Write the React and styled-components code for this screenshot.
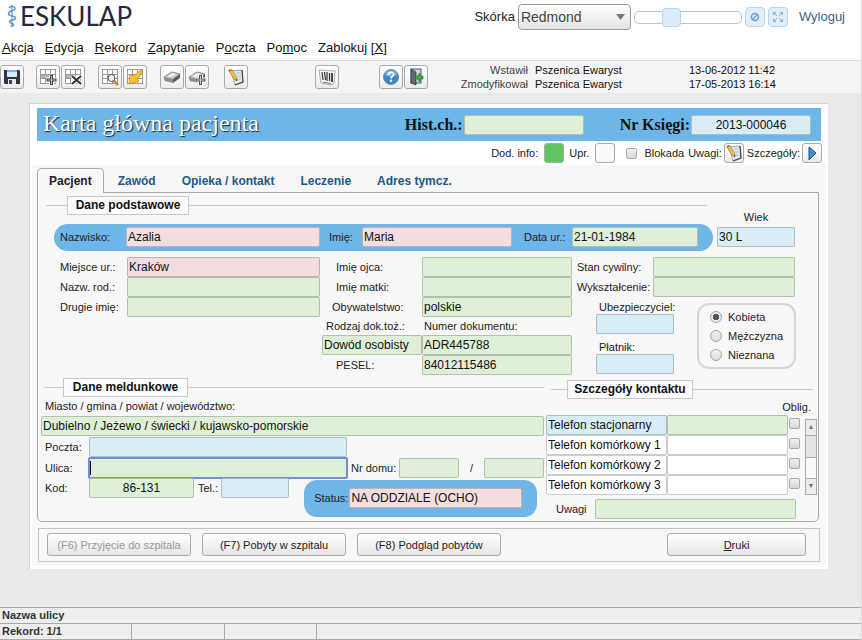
import { useState } from 'react';
import styled, { createGlobalStyle, css } from 'styled-components';

const colors = {
    blue: '#6eb5e8',
    green: '#dff0d8',
    pink: '#f2dede',
    sky: '#d9edf7',
    white: '#ffffff',
    page: '#eaeaea',
    panel: '#f7f7f7',
    line: '#c8c8c8',
    border: '#a8a8a8',
    link: '#1d5987',
};

const GlobalStyle = createGlobalStyle`
    * {
        box-sizing: border-box;
    }
    body {
        margin: 0;
        background: ${colors.page};
        color: #222;
        font: 11px/14px "Liberation Sans", Arial, sans-serif;
    }
    input, button, select {
        font-family: inherit;
    }
`;

/* ---------- icons ---------- */

const Svg = ({ size = 18, children }) => (
    <svg width={size} height={size} viewBox="0 0 18 18" aria-hidden="true">
        {children}
    </svg>
);

const Grid = () => (
    <>
        <rect x="1" y="1" width="15" height="14" fill="#fff" />
        <path
            d="M1.500 1v14M6.500 1v14M11.500 1v14M16.500 1v14M1 1.500h16M1 6.500h16M1 10.500h16M1 15.500h16"
            stroke="#9a9a9a"
            fill="none"
        />
    </>
);

const SaveIcon = () => (
    <Svg>
        <path d="M1 2h15l1 1v13H2l-1-1z" fill="#2b3440" />
        <rect x="4" y="2" width="10" height="7" fill="#d6ebf8" />
        <rect x="4" y="2" width="10" height="2" fill="#7cb5dd" />
        <rect x="5" y="11" width="8" height="5" fill="#e9e9e9" />
        <rect x="6" y="12" width="3" height="4" fill="#3c4650" />
    </Svg>
);

const AddRowIcon = () => (
    <Svg>
        <Grid />
        <rect x="2" y="7" width="9" height="3" fill="#b5b5b5" />
        <path d="M12.500 7v10M7.500 12h10" stroke="#fff" strokeWidth="5" />
        <path d="M12.500 7v10M7.500 12h10" stroke="#444" strokeWidth="3" />
        <path d="M12.500 8v8M8.500 12h8" stroke="#bbb" strokeWidth="1" />
    </Svg>
);

const DeleteRowIcon = () => (
    <Svg>
        <Grid />
        <rect x="2" y="7" width="9" height="3" fill="#b5b5b5" />
        <path d="M8 8l9 8M17 8l-9 8" stroke="#fff" strokeWidth="4" />
        <path d="M8 8l9 8M17 8l-9 8" stroke="#333" strokeWidth="2" />
    </Svg>
);

const SearchIcon = () => (
    <Svg>
        <Grid />
        <path d="M12 12l5 5" stroke="#c78a2c" strokeWidth="2.500" />
        <circle cx="10.500" cy="10" r="3.500" fill="#e8f3fb" stroke="#555" />
    </Svg>
);

const RunQueryIcon = () => (
    <Svg>
        <Grid />
        <path
            d="M16 1c0 4-2 8-5 10l2 2-10 3 1-10 2 2c4-1 6-4 10-7z"
            fill="#fbc02d"
            stroke="#c98a1b"
            strokeWidth="0.800"
        />
    </Svg>
);

const Eraser = () => (
    <>
        <path d="M1 9l8-5 8 2-7 6-8-1z" fill="#c9c9c9" stroke="#666" strokeWidth="0.700" />
        <path d="M1 9l9 2v4l-8-2c-1-1-1-3-1-4z" fill="#8d8d8d" />
        <path d="M10 11l7-5v4l-7 5z" fill="#5c5c5c" />
        <path d="M4 8l6-3 3 1-5 3z" fill="#f3f3f3" />
    </>
);

const EraserIcon = () => (
    <Svg>
        <Eraser />
    </Svg>
);

const EraserAddIcon = () => (
    <Svg>
        <Eraser />
        <path d="M12.500 7v10M7.500 12h10" stroke="#fff" strokeWidth="5" />
        <path d="M12.500 7v10M7.500 12h10" stroke="#555" strokeWidth="3" />
        <path d="M12.500 8v8M8.500 12h8" stroke="#ccc" strokeWidth="1" />
    </Svg>
);

const NoteIcon = () => (
    <Svg>
        <path d="M4 3l11-1 1 12-8 3z" fill="#dde8f1" stroke="#888" strokeWidth="0.700" />
        <path d="M15 2l1 12-8 3" stroke="#444" strokeWidth="1.200" fill="none" />
        <path d="M9 5l4 0M10 8h4M11 11h3" stroke="#a9bac8" strokeWidth="0.800" />
        <path d="M2 3l3-1 5 8v3l-3-2z" fill="#f6c23e" stroke="#8a6a1f" strokeWidth="0.600" />
        <path d="M1 2l3-1 1 1-3 1.500z" fill="#d0604f" />
        <path d="M8.500 12l1.500-1v2z" fill="#333" />
    </Svg>
);

const BarcodeIcon = () => (
    <Svg>
        <path d="M1 2l16 1-1 12-3 2-10-2z" fill="#f6f6f6" stroke="#999" strokeWidth="0.800" />
        <path d="M4 4l1 8M6.500 4l1 8M9 4v9M11.500 5v8" stroke="#333" strokeWidth="1.200" />
        <path d="M14 5v9" stroke="#333" strokeWidth="1.800" />
        <path d="M5 14l8 1.500" stroke="#777" strokeWidth="1" />
    </Svg>
);

const HelpIcon = () => (
    <Svg>
        <circle cx="9" cy="9" r="7.500" fill="#3b86c6" stroke="#7c8b99" />
        <path d="M3 7a6.200 6.200 0 0 1 12 0c-3 2-9 2-12 0z" fill="#77b3e0" />
        <path
            d="M6.500 7c0-3.300 5-3.300 5-.4 0 1.700-2.400 1.700-2.400 3.600"
            stroke="#fff"
            strokeWidth="1.800"
            fill="none"
        />
        <circle cx="9" cy="12.800" r="1.200" fill="#fff" />
    </Svg>
);

const ExitIcon = () => (
    <Svg>
        <rect x="4" y="1" width="10" height="14" fill="#ccd6df" stroke="#4d5660" />
        <path d="M4 1l5 3v13l-5-2z" fill="#5c6b78" stroke="#333" strokeWidth="0.700" />
        <path d="M16 8h-3V5L9 9.500l4 4.500v-3h3z" fill="#3fae3c" stroke="#1d7a1f" strokeWidth="0.700" />
    </Svg>
);

const PlayIcon = () => (
    <Svg>
        <path d="M6 3l7 6-7 7z" fill="#3d94d1" stroke="#1b4f7c" />
    </Svg>
);

const BanIcon = () => (
    <svg width="10" height="10" viewBox="0 0 10 10" aria-hidden="true">
        <circle cx="5" cy="5" r="3.500" fill="none" stroke="#6ba3cc" strokeWidth="1.500" />
        <path d="M7.500 2.500l-5 5" stroke="#6ba3cc" strokeWidth="1.500" />
    </svg>
);

const ExpandIcon = () => (
    <svg width="12" height="12" viewBox="0 0 12 12" aria-hidden="true">
        <path
            d="M1.500 4v-2.500h2.500M8 1.500h2.500v2.500M10.500 8v2.500h-2.500M4 10.500h-2.500v-2.500M2 2l3 3M10 2l-3 3M10 10l-3-3M2 10l3-3"
            fill="none"
            stroke="#7fb0d6"
        />
    </svg>
);

const StaffIcon = () => (
    <svg width="10" height="24" viewBox="0 0 10 24" aria-hidden="true">
        <path d="M5 1v22" stroke="#4f8ccb" strokeWidth="1" />
        <path
            d="M2 4c2-3 7-1 6 1S1 7 1.500 10s7 1 7 4-6 1-6 3.500 4 1 4 3-2 1.500-3 1.500"
            fill="none"
            stroke="#5b97d3"
            strokeWidth="1.500"
        />
    </svg>
);

/* ---------- header ---------- */

const Page = styled.div`
    display: flex;
    flex-direction: column;
    min-height: 100vh;
    border-right: 1px solid #dcdcdc;
`;

const Header = styled.header`
    background: #fff;
    height: 60px;
    display: flex;
    flex-direction: column;
    justify-content: space-between;
`;

const HeaderTop = styled.div`
    display: flex;
    justify-content: space-between;
    align-items: flex-start;
    padding: 0 16px 0 7px;
`;

const Logo = styled.div`
    display: flex;
    align-items: center;
    gap: 3px;
    color: #25283c;
    font: 26px/32px Lato, sans-serif;
`;

const SkinBar = styled.div`
    display: flex;
    align-items: center;
    gap: 3px;
    padding-top: 4px;
    font-size: 13px;
`;

const SelectBox = styled.div`
    position: relative;
    svg {
        position: absolute;
        right: 6px;
        top: 10px;
        pointer-events: none;
    }
`;

const Select = styled.select`
    appearance: none;
    width: 113px;
    height: 26px;
    padding: 0 2px;
    border: 1px solid #999;
    border-radius: 4px;
    background: linear-gradient(#fff, #e4e4e4);
    color: #444;
    font-size: 14px;
`;

const Slider = styled.input`
    appearance: none;
    width: 108px;
    height: 13px;
    margin: 0;
    border: 1px solid #a9cbe6;
    border-radius: 5px;
    background: #fff;
    &::-webkit-slider-thumb {
        appearance: none;
        width: 19px;
        height: 19px;
        border: 1px solid #b9d7ec;
        border-radius: 4px;
        background: #dcebf8;
    }
`;

const SkinButton = styled.button`
    display: flex;
    align-items: center;
    justify-content: center;
    width: 20px;
    height: 20px;
    padding: 0;
    border: 1px solid #b9d7ec;
    border-radius: 4px;
    background: #e0eef9;
`;

const Logout = styled.a`
    margin-left: 8px;
    color: #3d6283;
    text-decoration: none;
`;

const Menu = styled.nav`
    display: flex;
    gap: 11px;
    padding: 0 2px 4px;
    a {
        color: #111;
        font-size: 13px;
        line-height: 16px;
        text-decoration: none;
    }
`;

const Toolbar = styled.div`
    display: flex;
    align-items: center;
    height: 33px;
    border-top: 1px solid #dcdcdc;
    background: #f4f4f4;
`;

const ToolGroup = styled.div`
    display: flex;
    gap: 1px;
    margin-left: ${(p) => p.$space || 0}px;
`;

const IconButton = styled.button`
    display: flex;
    align-items: center;
    justify-content: center;
    flex: none;
    width: ${(p) => p.$size || 24}px;
    height: ${(p) => p.$size || 24}px;
    padding: 0;
    border: 1px solid #aaa;
    border-radius: 3px;
    background: ${(p) => p.$color || 'linear-gradient(#fff, #ececec)'};
    svg {
        flex: none;
    }
`;

const Audit = styled.dl`
    display: grid;
    grid-template-columns: 72px 147px auto;
    column-gap: 7px;
    margin: 0 0 0 28px;
    color: #111;
    white-space: nowrap;
    dt {
        text-align: right;
        color: #444;
    }
    dd {
        margin: 0;
    }
`;

/* ---------- card ---------- */

const Card = styled.main`
    margin: 10px 33px 30px 29px;
    border: 1px solid #d4d4d4;
    border-width: 1px 0 0 1px;
    background: #fff;
    padding-bottom: 4px;
`;

const TitleBar = styled.div`
    display: flex;
    align-items: center;
    height: 33px;
    margin: 4px 7px 0;
    padding: 0 10px 0 6px;
    background: ${colors.blue};
    color: #111;
    h1 {
        flex: 1;
        margin: 0;
        padding-bottom: 4px;
        color: #fff;
        font: 24px/28px "Liberation Serif", serif;
        text-shadow: 1px 1px 1px #123;
    }
    label {
        margin: 0 1px 0 36px;
        font: bold 16px/20px "Liberation Serif", serif;
    }
`;

const InfoRow = styled.div`
    display: flex;
    align-items: center;
    justify-content: flex-end;
    height: 24px;
    padding: 0 6px;
    gap: 3px;
`;

const InfoItem = styled.label`
    display: flex;
    align-items: center;
    gap: ${(p) => p.$gap || 6}px;
    margin-left: ${(p) => p.$space || 0}px;
`;

const Body = styled.div`
    margin: 0 2px;
    padding: 3px 6px 3px 5px;
    background: ${colors.panel};
`;

const Tabs = styled.div`
    display: flex;
    gap: 2px;
`;

const Tab = styled.button`
    height: 25px;
    margin-bottom: -1px;
    padding: 0 11px;
    border: 1px solid transparent;
    border-bottom: 0;
    border-radius: 5px 5px 0 0;
    background: none;
    color: ${colors.link};
    font-size: 12px;
    font-weight: bold;
    ${(p) =>
        p.$active &&
        css`
            border-color: ${colors.border};
            background: ${colors.panel};
            color: #222;
            position: relative;
        `}
`;

const Panel = styled.div`
    margin-right: 1px;
    border: 1px solid ${colors.border};
    border-radius: 0 0 5px 5px;
    padding: 3px 0 2px;
`;

const Field = styled.input`
    display: block;
    width: ${(p) => (p.$width ? `${p.$width}px` : '100%')};
    min-width: 0;
    height: 20px;
    padding: 0 1px;
    border: 1px solid rgba(0, 0, 0, 0.2);
    border-radius: 2px;
    background-color: ${(p) => colors[p.$tone || 'green']};
    color: #111;
    font-size: 12px;
    text-align: ${(p) => (p.$center ? 'center' : 'left')};
`;

const StreetField = styled(Field)`
    width: auto;
    flex: 1;
    height: 22px;
    margin: 0 -1px;
    border: 2px solid #6f8fd0;
    background-image: linear-gradient(#000, #000);
    background-repeat: no-repeat;
    background-size: 1px 14px;
    background-position: 0 center;
    outline: none;
`;

const CityField = styled(Field)`
    width: calc(100% - 3px);
    margin-left: 3px;
`;

const PhoneField = styled(Field)`
    margin-left: 3px;
`;

const Label = styled.label`
    padding-left: ${(p) => p.$indent || 0}px;
    white-space: nowrap;
`;

const LegendRow = styled.div`
    display: flex;
    align-items: center;
    padding: ${(p) => p.$pad || '0 6px'};
    &::before,
    &::after {
        content: '';
        height: 1px;
        background: ${colors.line};
    }
    &::before {
        width: ${(p) => p.$lead || 20}px;
    }
    &::after {
        flex: 1;
    }
    h2 {
        margin: 0;
        width: ${(p) => p.$width || 124}px;
        height: 19px;
        border: 1px solid ${colors.line};
        background: #fbfbfb;
        color: #111;
        font-size: 12px;
        line-height: 17px;
        text-align: center;
        white-space: nowrap;
    }
`;

const BasicTop = styled.div`
    display: grid;
    grid-template-columns: 1fr 105px;
`;

const Pill = styled.div`
    display: grid;
    grid-template-columns: 66px 194fr 42px 150fr 60px 126fr;
    align-items: center;
    margin: 9px 0 0 16px;
    padding: 3px 15px 4px 6px;
    border-radius: 14px;
    background: ${colors.blue};
`;

const Age = styled.div`
    display: flex;
    flex-direction: column;
    align-items: center;
    gap: 3px;
    width: 78px;
    margin: 14px 0 0 4px;
`;

const Details = styled.div`
    display: grid;
    grid-template-columns: 260fr 252fr 223fr;
    margin: 6px 23px 3px 22px;
`;

const FieldGrid = styled.div`
    display: grid;
    grid-template-columns: ${(p) => p.$label}px 1fr;
    grid-template-rows: 20px 20px 20px 18px;
    grid-auto-rows: 20px;
    align-items: center;
    align-content: start;
    margin-left: ${(p) => p.$space || 0}px;
`;

const PairGrid = styled(FieldGrid)`
    grid-template-rows: 20px 20px;
`;

const Insurance = styled.div`
    display: flex;
    justify-content: space-between;
    align-items: flex-start;
    margin: 3px 0 0 24px;
`;

const InsuranceFields = styled.div`
    display: flex;
    flex-direction: column;
    width: 78px;
    label {
        padding-left: 3px;
    }
    input + label {
        margin-top: 6px;
    }
`;

const SexBox = styled.div`
    display: flex;
    flex-direction: column;
    justify-content: center;
    gap: 5px;
    width: 99px;
    height: 66px;
    padding-left: 11px;
    margin: 3px -1px 0 0;
    border: 2px solid #d6d6d6;
    border-radius: 12px;
    label {
        display: flex;
        align-items: center;
        gap: 6px;
    }
`;

const Radio = styled.input`
    appearance: none;
    width: 12px;
    height: 12px;
    margin: 0;
    border: 1px solid #a5a5a5;
    border-radius: 50%;
    background: linear-gradient(#f2f2f2, #dcdcdc);
    &:checked {
        background: radial-gradient(#555 0 3px, #eaeaea 3px);
    }
`;

const Check = styled.input`
    appearance: none;
    width: 11px;
    height: 11px;
    margin: 0;
    border: 1px solid #aaa;
    border-radius: 2px;
    background: linear-gradient(#f0f0f0, #d8d8d8);
`;

const Lower = styled.div`
    display: grid;
    grid-template-columns: 508fr 272fr;
`;

const Address = styled.div`
    padding-right: 2px;
`;

const CityLabel = styled(Label)`
    display: block;
    padding: 2px 0 3px 7px;
`;

const AddressRow = styled.div`
    display: flex;
    align-items: center;
    height: 21px;
    margin-right: ${(p) => p.$end || 0}px;
    padding-left: 7px;
    > label:first-child {
        width: 44px;
        flex: none;
    }
`;

const HouseNumber = styled.div`
    display: flex;
    align-items: center;
    width: 197px;
    padding-left: 4px;
    span {
        flex: 1;
        text-align: center;
    }
    label {
        margin-right: 3px;
    }
`;

const CodeRow = styled(AddressRow)`
    height: 41px;
    align-items: flex-start;
    > label {
        line-height: 20px;
    }
`;

const Status = styled.div`
    display: flex;
    align-items: center;
    gap: 1px;
    flex: 1;
    height: 37px;
    margin: 2px 7px 0 15px;
    padding: 0 15px 2px 10px;
    border-radius: 13px;
    background: ${colors.blue};
`;

const Contact = styled.div`
    padding-top: 2px;
`;

const PhoneTable = styled.table`
    width: 100%;
    table-layout: fixed;
    border-spacing: 0;
    td,
    th {
        padding: 0;
    }
    th {
        height: 16px;
        padding-right: 7px;
        font-weight: normal;
        text-align: right;
    }
    td:nth-child(3) {
        padding-left: 1px;
    }
`;

const ScrollBar = styled.div`
    display: flex;
    flex-direction: column;
    height: 76px;
    width: 12px;
    margin: 3px 0 0 1px;
    border: 1px solid #aaa;
    background: #f9f9f9;
    button {
        height: 16px;
        padding: 0;
        border: 0;
        border-bottom: 1px solid #aaa;
        background: #ececec;
        color: #777;
        font-size: 7px;
        line-height: 12px;
    }
    button:last-child {
        border-top: 1px solid #aaa;
        border-bottom: 0;
        margin-top: auto;
    }
`;

const Thumb = styled.div`
    height: 22px;
    border-bottom: 1px solid #aaa;
    background: #e4e4e4;
`;

const NotesRow = styled.div`
    display: flex;
    align-items: center;
    gap: 8px;
    padding: 4px 22px 0 10px;
`;

const Actions = styled.div`
    display: flex;
    gap: 11px;
    margin: 6px 0 0 1px;
    padding: 4px 13px 5px 8px;
    border: 1px solid #c4c4c4;
`;

const ActionButton = styled.button`
    width: ${(p) => p.$width || 144}px;
    height: 23px;
    margin-left: ${(p) => (p.$last ? 'auto' : 0)};
    padding: 0;
    border: 1px solid #aaa;
    border-radius: 3px;
    background: linear-gradient(#fff, #e6e6e6);
    color: #222;
    font-size: 11px;
    &:disabled {
        color: #999;
    }
`;

/* ---------- status bar ---------- */

const StatusBar = styled.footer`
    margin-top: auto;
    border-top: 1px solid ${colors.border};
    background: #eee;
    color: #333;
    font-weight: bold;
    line-height: 15px;
`;

const StatusLine = styled.div`
    display: flex;
    height: 16px;
    border-bottom: 1px solid ${colors.border};
`;

const StatusCell = styled.div`
    padding-left: 2px;
    ${(p) =>
        p.$width &&
        css`
            width: ${p.$width}px;
            border-right: 1px solid ${colors.border};
        `}
`;

/* ---------- data ---------- */

const menu = [
    ['', 'A', 'kcja'],
    ['', 'E', 'dycja'],
    ['', 'R', 'ekord'],
    ['', 'Z', 'apytanie'],
    ['P', 'o', 'czta'],
    ['Po', 'm', 'oc'],
    ['Zablokuj [', 'X', ']'],
];

const tools = [
    { space: 0, items: [['Zapisz', SaveIcon]] },
    { space: 12, items: [['Dodaj rekord', AddRowIcon], ['Usuń rekord', DeleteRowIcon]] },
    { space: 13, items: [['Szukaj', SearchIcon], ['Wykonaj zapytanie', RunQueryIcon]] },
    { space: 13, items: [['Wyczyść', EraserIcon], ['Wyczyść i dodaj', EraserAddIcon]] },
    { space: 15, items: [['Notatka', NoteIcon]] },
    { space: 67, items: [['Kod kreskowy', BarcodeIcon]] },
    { space: 40, items: [['Pomoc', HelpIcon], ['Wyjście', ExitIcon]] },
];

const tabs = ['Pacjent', 'Zawód', 'Opieka / kontakt', 'Leczenie', 'Adres tymcz.'];

const phones = [
    'Telefon stacjonarny',
    'Telefon komórkowy 1',
    'Telefon komórkowy 2',
    'Telefon komórkowy 3',
];

const LabeledField = ({ id, label, value = '', tone, indent, center }) => (
    <>
        <Label htmlFor={id} $indent={indent}>
            {label}
        </Label>
        <Field id={id} defaultValue={value} $tone={tone} $center={center} />
    </>
);

const BasicData = () => {
    const [sex, setSex] = useState('Kobieta');

    return (
        <>
            <BasicTop>
                <div>
                    <LegendRow $pad="0 6px 0 8px" $lead={21} $width={122}>
                        <h2>Dane podstawowe</h2>
                    </LegendRow>
                    <Pill>
                        <LabeledField id="nazwisko" label="Nazwisko:" value="Azalia" tone="pink" />
                        <LabeledField id="imie" label="Imię:" value="Maria" tone="pink" indent={9} />
                        <LabeledField id="dataUr" label="Data ur.:" value="21-01-1984" indent={12} />
                    </Pill>
                </div>
                <Age>
                    <Label htmlFor="wiek">Wiek</Label>
                    <Field id="wiek" defaultValue="30 L" $tone="sky" />
                </Age>
            </BasicTop>
            <Details>
                <FieldGrid $label={67}>
                    <LabeledField id="miejsce" label="Miejsce ur.:" value="Kraków" tone="pink" />
                    <LabeledField id="rodowe" label="Nazw. rod.:" />
                    <LabeledField id="drugie" label="Drugie imię:" />
                </FieldGrid>
                <FieldGrid $label={100} $space={2}>
                    <LabeledField id="ojciec" label="Imię ojca:" indent={14} />
                    <LabeledField id="matka" label="Imię matki:" indent={14} />
                    <LabeledField id="obyw" label="Obywatelstwo:" value="polskie" indent={10} />
                    <Label htmlFor="rodzaj" $indent={4}>
                        Rodzaj dok.toż.:
                    </Label>
                    <Label htmlFor="numer" $indent={2}>
                        Numer dokumentu:
                    </Label>
                    <Field id="rodzaj" defaultValue="Dowód osobisty" />
                    <Field id="numer" defaultValue="ADR445788" />
                    <LabeledField id="pesel" label="PESEL:" value="84012115486" indent={14} />
                </FieldGrid>
                <div>
                    <PairGrid $label={76} $space={5}>
                        <LabeledField id="stan" label="Stan cywilny:" />
                        <LabeledField id="wyksz" label="Wykształcenie:" />
                    </PairGrid>
                    <Insurance>
                        <InsuranceFields>
                            <LabeledField id="ubezp" label="Ubezpieczyciel:" tone="sky" />
                            <LabeledField id="platnik" label="Płatnik:" tone="sky" />
                        </InsuranceFields>
                        <SexBox role="radiogroup" aria-label="Płeć">
                            {['Kobieta', 'Mężczyzna', 'Nieznana'].map((s) => (
                                <label key={s}>
                                    <Radio
                                        type="radio"
                                        name="plec"
                                        checked={sex === s}
                                        onChange={() => setSex(s)}
                                    />
                                    {s}
                                </label>
                            ))}
                        </SexBox>
                    </Insurance>
                </div>
            </Details>
        </>
    );
};

const AddressData = () => (
    <Address>
        <LegendRow $pad="0 0 0 6px" $lead={19} $width={125}>
            <h2>Dane meldunkowe</h2>
        </LegendRow>
        <CityLabel htmlFor="miasto">Miasto / gmina / powiat / województwo:</CityLabel>
        <CityField id="miasto" defaultValue="Dubielno / Jeżewo / świecki / kujawsko-pomorskie" />
        <AddressRow $end={197}>
            <LabeledField id="poczta" label="Poczta:" tone="sky" />
        </AddressRow>
        <AddressRow>
            <Label htmlFor="ulica">Ulica:</Label>
            <StreetField id="ulica" />
            <HouseNumber>
                <Label htmlFor="dom">Nr domu:</Label>
                <Field id="dom" $width={60} />
                <span>/</span>
                <Field id="lokal" aria-label="Nr lokalu" $width={60} />
            </HouseNumber>
        </AddressRow>
        <CodeRow>
            <Label htmlFor="kod">Kod:</Label>
            <Field id="kod" defaultValue="86-131" $width={105} $center />
            <Label htmlFor="tel" $indent={4}>
                Tel.:
            </Label>
            <PhoneField id="tel" $tone="sky" $width={68} />
            <Status>
                <Label htmlFor="status">Status:</Label>
                <Field id="status" defaultValue="NA ODDZIALE (OCHO)" $tone="pink" />
            </Status>
        </CodeRow>
    </Address>
);

const ContactData = () => (
    <Contact>
        <LegendRow $pad="0 5px" $lead={16} $width={126}>
            <h2>Szczegóły kontaktu</h2>
        </LegendRow>
        <PhoneTable>
            <colgroup>
                <col />
                <col />
                <col width="16" />
                <col width="14" />
            </colgroup>
            <thead>
                <tr>
                    <th colSpan={4}>Oblig.</th>
                </tr>
            </thead>
            <tbody>
                {phones.map((phone, i) => (
                    <tr key={phone}>
                        <td>
                            <Field
                                aria-label={`Rodzaj kontaktu ${i + 1}`}
                                defaultValue={phone}
                                $tone={i === 0 ? 'sky' : 'white'}
                            />
                        </td>
                        <td>
                            <Field aria-label={phone} $tone={i === 0 ? 'green' : 'white'} />
                        </td>
                        <td>
                            <Check type="checkbox" aria-label={`${phone} obligatoryjny`} />
                        </td>
                        {i === 0 && (
                            <td rowSpan={4}>
                                <ScrollBar>
                                    <button type="button" aria-label="W górę">▲</button>
                                    <Thumb />
                                    <button type="button" aria-label="W dół">▼</button>
                                </ScrollBar>
                            </td>
                        )}
                    </tr>
                ))}
            </tbody>
        </PhoneTable>
        <NotesRow>
            <LabeledField id="uwagi" label="Uwagi" />
        </NotesRow>
    </Contact>
);

export default function App() {
    const [tab, setTab] = useState('Pacjent');

    return (
        <Page>
            <GlobalStyle />
            <Header>
                <HeaderTop>
                    <Logo>
                        <StaffIcon />
                        ESKULAP
                    </Logo>
                    <SkinBar>
                        <label htmlFor="skin">Skórka</label>
                        <SelectBox>
                            <Select id="skin">
                                <option>Redmond</option>
                            </Select>
                            <svg width="9" height="6" viewBox="0 0 9 6" aria-hidden="true">
                                <path d="M0 0h9l-4.500 6z" fill="#777" />
                            </svg>
                        </SelectBox>
                        <Slider type="range" defaultValue={31} aria-label="Rozmiar" />
                        <SkinButton type="button" aria-label="Resetuj">
                            <BanIcon />
                        </SkinButton>
                        <SkinButton type="button" aria-label="Pełny ekran">
                            <ExpandIcon />
                        </SkinButton>
                        <Logout href="#wyloguj">Wyloguj</Logout>
                    </SkinBar>
                </HeaderTop>
                <Menu>
                    {menu.map(([before, key, after]) => (
                        <a href="#menu" key={before + key + after}>
                            {before}
                            <u>{key}</u>
                            {after}
                        </a>
                    ))}
                </Menu>
            </Header>
            <Toolbar>
                {tools.map((group) => (
                    <ToolGroup key={group.items[0][0]} $space={group.space}>
                        {group.items.map(([name, Icon]) => (
                            <IconButton type="button" key={name} aria-label={name}>
                                <Icon />
                            </IconButton>
                        ))}
                    </ToolGroup>
                ))}
                <Audit>
                    <dt>Wstawił</dt>
                    <dd>Pszenica Ewaryst</dd>
                    <dd>13-06-2012 11:42</dd>
                    <dt>Zmodyfikował</dt>
                    <dd>Pszenica Ewaryst</dd>
                    <dd>17-05-2013 16:14</dd>
                </Audit>
            </Toolbar>

            <Card>
                <TitleBar>
                    <h1>Karta główna pacjenta</h1>
                    <label htmlFor="hist">Hist.ch.:</label>
                    <Field id="hist" $width={120} />
                    <label htmlFor="ksiega">Nr Księgi:</label>
                    <Field id="ksiega" defaultValue="2013-000046" $tone="sky" $width={120} $center />
                </TitleBar>
                <InfoRow>
                    <InfoItem>
                        Dod. info:
                        <IconButton type="button" $size={20} $color="#5fc663" />
                    </InfoItem>
                    <InfoItem $space={2}>
                        Upr.
                        <IconButton type="button" $size={20} $color="#f9f9f9" />
                    </InfoItem>
                    <InfoItem $space={8} $gap={7}>
                        <Check type="checkbox" />
                        Blokada
                    </InfoItem>
                    <InfoItem $gap={2} $space={1}>
                        Uwagi:
                        <IconButton type="button" $size={20}>
                            <NoteIcon />
                        </IconButton>
                    </InfoItem>
                    <InfoItem $gap={2}>
                        Szczegóły:
                        <IconButton type="button" $size={20}>
                            <PlayIcon />
                        </IconButton>
                    </InfoItem>
                </InfoRow>
                <Body>
                    <Tabs role="tablist">
                        {tabs.map((t) => (
                            <Tab
                                key={t}
                                type="button"
                                role="tab"
                                aria-selected={t === tab}
                                $active={t === tab}
                                onClick={() => setTab(t)}
                            >
                                {t}
                            </Tab>
                        ))}
                    </Tabs>
                    <Panel>
                        <BasicData />
                        <Lower>
                            <AddressData />
                            <ContactData />
                        </Lower>
                    </Panel>
                    <Actions>
                        <ActionButton type="button" disabled>
                            (F6) Przyjęcie do szpitala
                        </ActionButton>
                        <ActionButton type="button">(F7) Pobyty w szpitalu</ActionButton>
                        <ActionButton type="button">(F8) Podgląd pobytów</ActionButton>
                        <ActionButton type="button" $width={139} $last>
                            <u>D</u>ruki
                        </ActionButton>
                    </Actions>
                </Body>
            </Card>

            <StatusBar>
                <StatusLine>
                    <StatusCell>Nazwa ulicy</StatusCell>
                </StatusLine>
                <StatusLine>
                    <StatusCell $width={132}>Rekord: 1/1</StatusCell>
                    <StatusCell $width={93} />
                    <StatusCell $width={92} />
                </StatusLine>
            </StatusBar>
        </Page>
    );
}
